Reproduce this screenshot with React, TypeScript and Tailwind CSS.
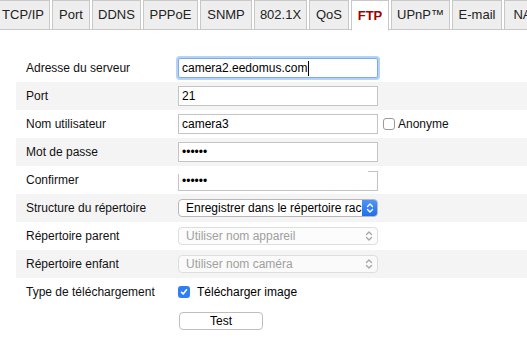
import React from "react";

const tabs = [
  { label: "TCP/IP", w: "w-[54px]" },
  { label: "Port", w: "w-[38px]" },
  { label: "DDNS", w: "w-[49px]" },
  { label: "PPPoE", w: "w-[55px]" },
  { label: "SNMP", w: "w-[52px]" },
  { label: "802.1X", w: "w-[53px]" },
  { label: "QoS", w: "w-[40px]" },
  { label: "FTP", w: "w-[38px]", active: true },
  { label: "UPnP™", w: "w-[59px]" },
  { label: "E-mail", w: "w-[50px]" },
  { label: "NAT", w: "w-[44px]" },
];

function Chevrons({ color }: { color: string }) {
  return (
    <svg width="8" height="12" viewBox="0 0 8 12" fill="none" stroke={color} strokeWidth="1.4" strokeLinecap="round" strokeLinejoin="round">
      <path d="M1.5 4.5 L4 2 L6.5 4.5" />
      <path d="M1.5 7.5 L4 10 L6.5 7.5" />
    </svg>
  );
}

function Row({ label, gray, children }: { label: string; gray?: boolean; children?: React.ReactNode }) {
  return (
    <div className={`flex h-[28px] items-center ${gray ? "bg-[#f4f4f4]" : "bg-white"}`}>
      <div className="w-[162px] shrink-0 pl-[10px] text-[12px] text-[#111]">{label}</div>
      <div className="flex items-center">{children}</div>
    </div>
  );
}

const inputCls =
  "h-[20px] w-[200px] border border-[#c4c4c4] bg-white px-[3px] text-[12px] text-black outline-none font-['Liberation_Sans',Arial,sans-serif]";

export default function App() {
  return (
    <div className="h-[350px] w-[527px] overflow-hidden bg-white font-['Liberation_Sans',Arial,sans-serif]">
      {/* tab strip */}
      <div className="relative h-[30px] border-b border-[#c8c8c8]">
        <div className="ml-[-4px] flex gap-[2px]">
          {tabs.map((t) => (
            <div
              key={t.label}
              className={`flex shrink-0 items-center justify-center border border-[#c8c8c8] text-[13px] ${t.w} ${
                t.active
                  ? "relative z-10 h-[31px] border-b-white bg-white font-bold text-[#a00000]"
                  : "h-[30px] bg-[#eeeeee] text-[#222]"
              }`}
            >
              {t.label}
            </div>
          ))}
        </div>
      </div>

      {/* form */}
      <div className="ml-[16px] mt-[24px]">
        <Row label="Adresse du serveur">
          <div className="flex h-[20px] w-[200px] items-center rounded-[2px] border border-[#7fabe4] bg-white px-[3px] text-[12px] text-black shadow-[0_0_0_2px_#b3d3f8]">
            camera2.eedomus.com
            <span className="ml-[1px] inline-block h-[15px] w-[1px] bg-black" />
          </div>
        </Row>
        <Row label="Port" gray>
          <input readOnly className={inputCls} value="21" />
        </Row>
        <Row label="Nom utilisateur">
          <input readOnly className={inputCls} value="camera3" />
          <label className="ml-[5px] flex items-center text-[12px] text-[#111]">
            <span className="mr-[3px] inline-block h-[12px] w-[12px] rounded-[3px] border border-[#9a9a9a] bg-white" />
            Anonyme
          </label>
        </Row>
        <Row label="Mot de passe" gray>
          <input readOnly type="password" className={inputCls} value="abcdef" />
        </Row>
        <Row label="Confirmer">
          <div className="relative">
            <input readOnly type="password" className={inputCls} value="abcdef" />
            <span className="absolute left-[-1px] top-0 h-[6px] w-[191px] bg-white" />
          </div>
        </Row>
        <Row label="Structure du répertoire" gray>
          <div className="flex h-[18px] w-[200px] items-center overflow-hidden rounded-[4px] border border-[#b9b9b9] bg-white text-[12px] text-black">
            <span className="flex-1 overflow-hidden whitespace-nowrap pl-[7px]">Enregistrer dans le répertoire racine</span>
            <span className="flex h-full w-[15px] shrink-0 items-center justify-center bg-gradient-to-b from-[#4d95f9] to-[#1f6fe6]">
              <Chevrons color="#ffffff" />
            </span>
          </div>
        </Row>
        <Row label="Répertoire parent">
          <div className="flex h-[18px] w-[200px] items-center justify-between rounded-[4px] border border-[#dedede] bg-[#fcfcfc] pl-[7px] pr-[4px] text-[12px] text-[#a0a0a0]">
            <span>Utiliser nom appareil</span>
            <Chevrons color="#a8a8a8" />
          </div>
        </Row>
        <Row label="Répertoire enfant" gray>
          <div className="flex h-[18px] w-[200px] items-center justify-between rounded-[4px] border border-[#dedede] bg-[#fafafa] pl-[7px] pr-[4px] text-[12px] text-[#a0a0a0]">
            <span>Utiliser nom caméra</span>
            <Chevrons color="#a8a8a8" />
          </div>
        </Row>
        <Row label="Type de téléchargement">
          <label className="flex items-center text-[12px] text-black">
            <span className="mr-[7px] flex h-[12px] w-[12px] items-center justify-center rounded-[3px] bg-[#2f7ef6]">
              <svg width="8" height="8" viewBox="0 0 8 8" fill="none" stroke="#fff" strokeWidth="1.6" strokeLinecap="round" strokeLinejoin="round">
                <path d="M1.5 4.3 L3.2 6 L6.5 1.8" />
              </svg>
            </span>
            Télécharger image
          </label>
        </Row>
        <div className="flex h-[28px] items-center pl-[162px] pt-[2px]">
          <button className="ml-[1px] h-[18px] w-[84px] rounded-[4px] border border-[#bdbdbd] bg-white text-[12px] leading-none text-black">
            Test
          </button>
        </div>
      </div>
    </div>
  );
}
